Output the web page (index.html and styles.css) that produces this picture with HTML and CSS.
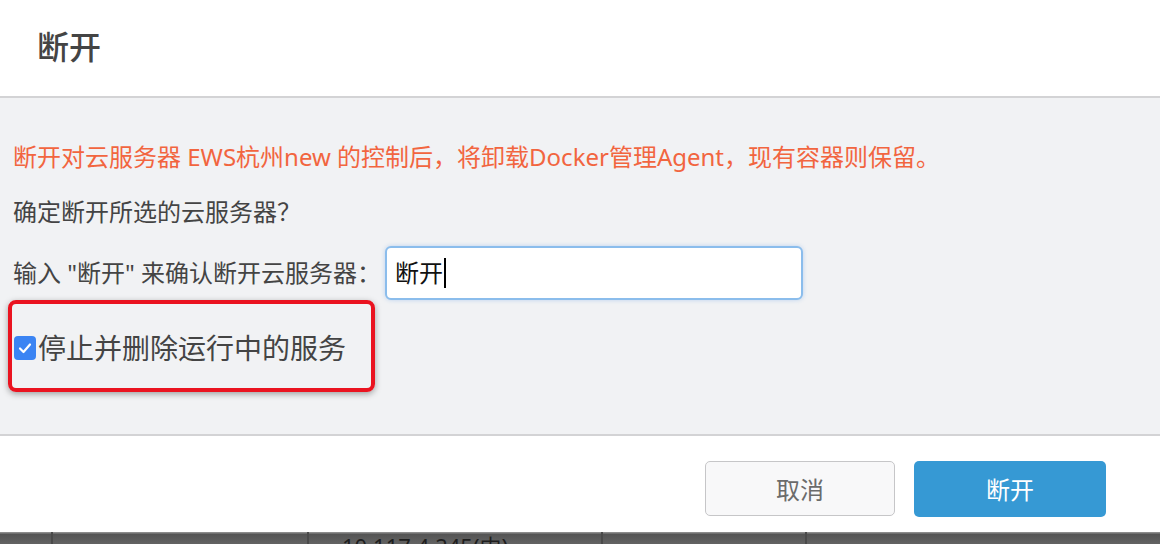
FILE: index.html
```html
<!DOCTYPE html>
<html lang="zh-CN">
<head>
<meta charset="utf-8">
<title>断开</title>
<link rel="stylesheet" href="styles.css">
</head>
<body>
<div class="modal">
  <div class="modal-header">
    <h1 class="modal-title">断开</h1>
  </div>
  <div class="modal-body">
    <p class="warn">断开对云服务器 EWS杭州new 的控制后，将卸载Docker管理Agent，现有容器则保留。</p>
    <p class="ask">确定断开所选的云服务器？</p>
    <div class="confirm-row">
      <span class="confirm-label">输入 "断开" 来确认断开云服务器：</span>
      <div class="text-input"><span class="typed">断开</span><span class="caret"></span></div>
    </div>
    <label class="check-row">
      <span class="checkbox">
        <svg viewBox="0 0 22 24" width="22" height="24"><path d="M6 12.5 L9.5 16 L16 8.5" fill="none" stroke="#fff" stroke-width="2.2" stroke-linecap="round" stroke-linejoin="round"/></svg>
      </span>
      <span class="check-text">停止并删除运行中的服务</span>
    </label>
    <div class="highlight"></div>
  </div>
  <div class="modal-footer">
    <button class="btn btn-cancel">取消</button>
    <button class="btn btn-primary">断开</button>
  </div>
</div>
<div class="backdrop-table">
  <div class="cell c1"></div>
  <div class="cell c2"></div>
  <div class="cell c3"><span class="ip">10.117.4.245(内)</span></div>
  <div class="cell c4"></div>
  <div class="cell c5"></div>
</div>
</body>
</html>
```

FILE: styles.css
```css
* { box-sizing: border-box; }
html, body {
  margin: 0;
  padding: 0;
  width: 1160px;
  height: 544px;
  overflow: hidden;
  background: #5a5a5a;
  font-family: "Noto Sans", "Noto Sans CJK SC", sans-serif;
  text-spacing-trim: space-all;
}
.modal {
  width: 1160px;
  height: 532px;
  background: #fff;
  display: flex;
  flex-direction: column;
}
.modal-header {
  height: 98px;
  flex: none;
  padding-left: 37px;
  display: flex;
  align-items: center;
  border-bottom: 2px solid #d3d3d5;
}
.modal-title {
  margin: 0;
  font-size: 32px;
  font-weight: 500;
  color: #444;
  line-height: 40px;
  padding-bottom: 3px;
}
.modal-body {
  position: relative;
  height: 338px;
  flex: none;
  background: #f1f2f4;
  padding: 41px 0 0 13px;
  border-bottom: 2px solid #d3d3d5;
}
.warn {
  margin: 0;
  font-size: 24px;
  line-height: 36px;
  color: #f2653f;
}
.ask {
  margin: 19px 0 0;
  font-size: 24px;
  line-height: 36px;
  color: #444;
}
.confirm-row {
  margin-top: 16px;
  display: flex;
  align-items: center;
}
.confirm-label {
  font-size: 24px;
  color: #444;
  line-height: 36px;
  width: 372px;
}
.text-input {
  width: 418px;
  height: 54px;
  background: #fff;
  border: 2px solid #8bbdec;
  border-radius: 6px;
  box-shadow: 0 0 4px rgba(120, 170, 230, 0.45);
  display: flex;
  align-items: center;
  padding-left: 8px;
}
.typed {
  font-size: 24px;
  color: #111;
  line-height: 30px;
}
.caret {
  width: 2px;
  height: 30px;
  background: #000;
  margin-left: 1px;
}
.check-row {
  margin-top: 28px;
  display: flex;
  align-items: center;
  height: 40px;
}
.checkbox {
  width: 22px;
  height: 24px;
  margin-left: 1px;
  background: #3b84f3;
  border-radius: 4px;
  display: flex;
}
.check-text {
  font-size: 28px;
  line-height: 40px;
  color: #444;
  margin-left: 2px;
}
.highlight {
  position: absolute;
  left: 8px;
  top: 202px;
  width: 367px;
  height: 92px;
  border: 4px solid #ea1320;
  border-radius: 8px;
  box-shadow: 0 2px 6px rgba(0, 0, 0, 0.35);
}
.modal-footer {
  height: 96px;
  flex: none;
  display: flex;
  justify-content: flex-end;
  align-items: center;
  gap: 19px;
  padding-right: 54px;
  padding-top: 9px;
}
.btn {
  font-family: inherit;
  font-size: 24px;
  border-radius: 5px;
  cursor: pointer;
}
.btn-cancel {
  width: 190px;
  height: 55px;
  background: #f8f8f9;
  border: 1px solid #c6c6c8;
  color: #6b6b6b;
}
.btn-primary {
  width: 192px;
  height: 56px;
  background: #3699d4;
  border: none;
  color: #fff;
}
.backdrop-table {
  height: 12px;
  display: flex;
  background: linear-gradient(#8c8c8c 0, #8c8c8c 1px, #545454 2px, #636363 12px);
  overflow: hidden;
}
.cell {
  height: 12px;
  border-right: 2px solid #4a4a4a;
  flex: none;
}
.c1 { width: 53px; }
.c2 { width: 256px; }
.c3 { width: 294px; padding-left: 33px; }
.c4 { width: 204px; }
.c5 { flex: 1; border-right: none; }
.ip {
  display: block;
  font-size: 22px;
  line-height: 22px;
  color: #1e1e1e;
  margin-top: 3px;
  white-space: nowrap;
}
```
